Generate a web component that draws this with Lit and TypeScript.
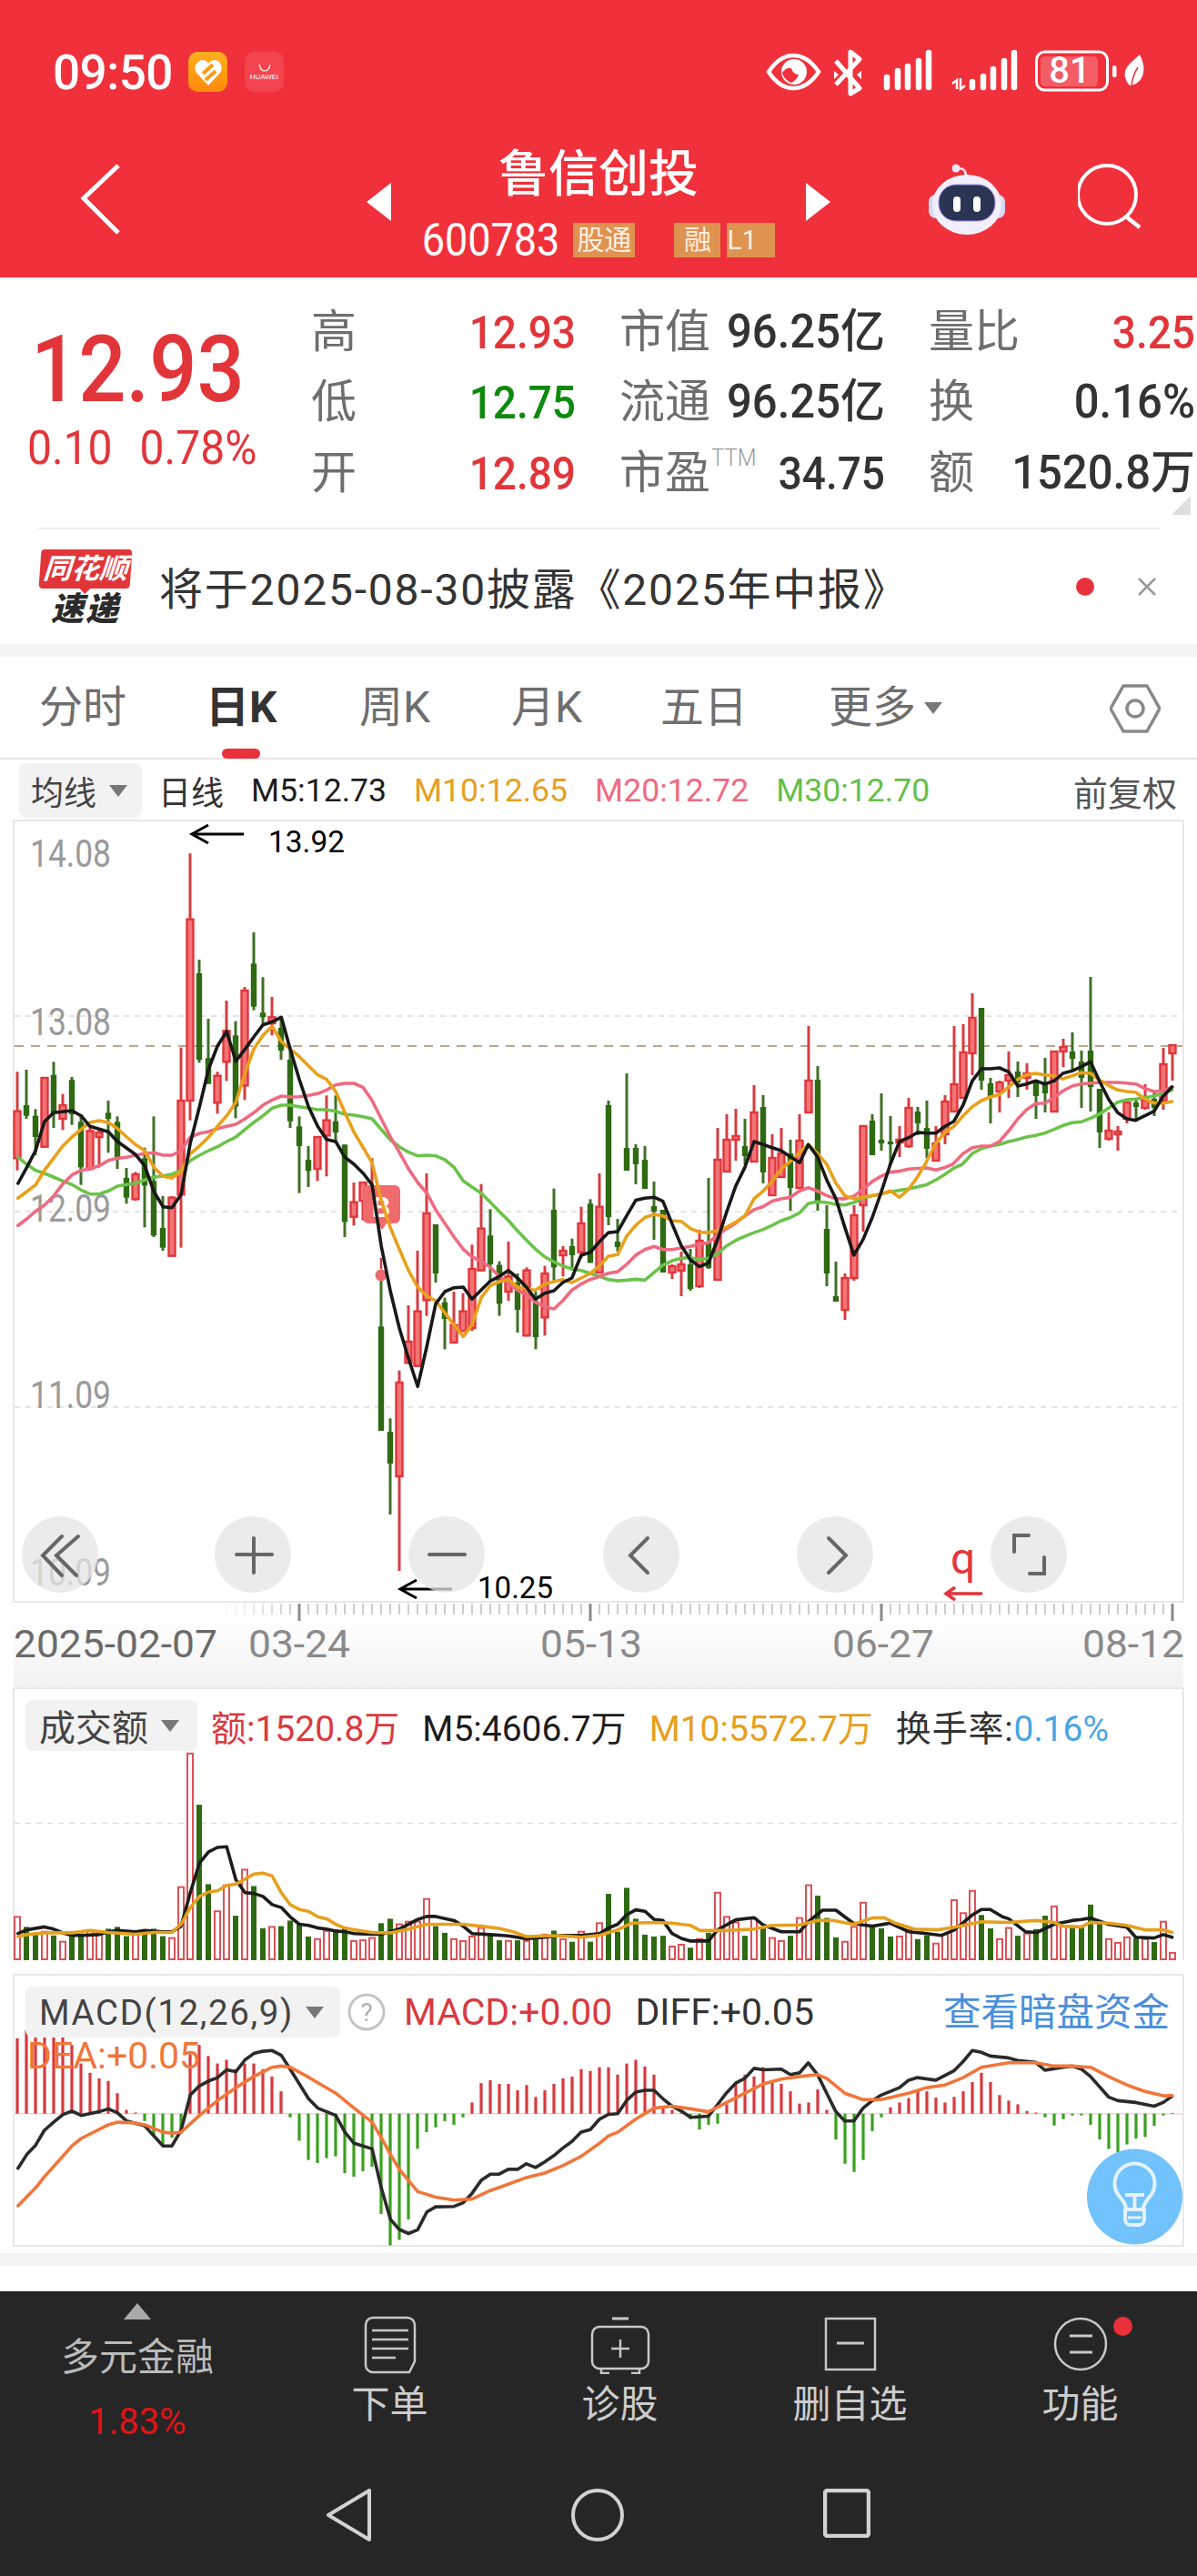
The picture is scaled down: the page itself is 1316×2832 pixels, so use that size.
import { LitElement, html, css, svg } from "lit";
import { customElement } from "lit/decorators.js";

type P = number[];
const ZX = 2.376;
const xL = (x: number) => x / ZX;
const xR = (x: number) => 656 + x / ZX;
const y5 = (y: number) => 1110 + y / 3; // left price crop
const y4 = (y: number) => 880 + y / 3; // upper right price crop
const y6 = (y: number) => 1280 + y / 2.904; // lower right price crop
const y7 = (y: number) => 1840 + y / 2.45; // lower panels
const cx = (i: number) => 19 + 10 * i;

function seg(a: P, fx: (n: number) => number, fy: (n: number) => number) {
  const o: string[] = [];
  for (let i = 0; i < a.length; i += 2) o.push(`${fx(a[i]).toFixed(1)},${fy(a[i + 1]).toFixed(1)}`);
  return o.join(" ");
}

const M5 = [
  seg([47,573,70,520,93,465,116,370,140,340,188,333,212,350,235,385,283,403,307,435,354,478,378,515,402,600,426,650,449,653,473,610,497,440,521,320,545,195,568,120,592,72,616,170,640,130,663,90,687,50,711,40,735,25,758,130,782,230,806,320,830,385,853,428,877,435,901,487,925,510,949,540,972,578,996,780,1020,930,1043,1050,1067,1150,1091,1243,1115,1110,1138,970,1162,930,1186,917,1210,915,1233,955,1257,925,1281,895,1304,880,1328,860,1352,885,1375,915,1399,955,1423,935,1447,927,1470,900,1494,885,1518,810,1542,800,1566,765], xL, y5),
  seg([31,218,55,215,78,165,102,115,126,108,150,105,173,118,197,190,221,260,245,305,268,327,292,315,316,240,340,150,363,70,387,10], xR, y6),
  seg([411,1125,435,1135,458,1145,482,1155,506,1175,530,1195,553,1135,577,1175], xR, y4),
  seg([601,50,625,110,648,200,672,290,696,240,720,170,743,90,767,0], xR, y6),
  seg([791,1125,815,1112,838,1095,862,1097,886,1097,910,1075,933,1058,957,1005,981,925,1005,885,1028,885,1052,882,1076,895,1100,942,1123,935,1147,925,1171,935,1195,925,1218,900,1242,892,1266,878,1290,862,1313,925,1337,985,1361,1030,1385,1050,1408,1055,1432,1040,1456,1025,1480,975,1503,945], xR, y4),
].join(" ");
const M10 = [
  seg([47,622,70,600,93,578,116,530,140,490,164,450,188,420,212,395,235,372,259,366,283,372,307,392,331,420,354,445,378,465,402,520,426,550,449,555,473,535,497,475,521,450,545,420,568,385,592,350,616,305,640,210,663,130,687,85,711,55,735,105,758,130,782,155,806,185,830,215,853,230,877,270,901,340,925,405,949,455,972,505,996,630,1020,720,1043,790,1067,860,1091,915,1115,945,1138,960,1162,1000,1186,1040,1210,1078,1233,1040,1257,950,1281,910,1304,897,1328,890,1352,915,1375,922,1399,925,1423,905,1447,897,1470,890,1494,900,1518,885,1542,870,1566,845], xL, y5),
  seg([31,293,55,288,78,230,102,195,126,170,150,160,173,165,197,180,221,182,245,205,268,217,292,218,316,212,340,200,363,185,387,165,411,110,435,85,458,55,482,15], xR, y6),
  seg([506,1190,530,1160,553,1135,577,1165,601,1200], xR, y4),
  seg([625,60,648,100,672,110,696,105,720,100,743,95,767,85,791,105,815,80,838,40,858,0], xR, y6),
  seg([886,1130,910,1095,933,1075,957,1040,981,1010,1005,990,1028,978,1052,970,1076,945,1100,920,1123,905,1147,900,1171,905,1195,908,1218,918,1242,908,1266,898,1290,900,1313,922,1337,940,1361,955,1385,960,1408,962,1432,985,1456,998,1480,998,1503,993], xR, y4),
].join(" ");
const M20 = [
  seg([47,712,70,690,93,665,116,645,140,615,164,575,188,545,212,530,235,525,259,515,283,497,307,490,331,487,354,480,378,475,402,472,426,480,449,480,473,465,497,420,521,408,545,402,568,392,592,385,616,378,640,360,663,340,687,315,711,298,735,285,758,288,782,287,806,283,830,277,853,265,877,248,901,243,925,243,949,257,972,300,996,360,1020,420,1043,470,1067,525,1091,570,1115,605,1138,660,1162,705,1186,750,1210,790,1233,815,1257,830,1281,850,1304,880,1328,900,1352,925,1375,940,1399,965,1423,980,1447,987,1470,960,1494,925,1518,905,1542,890,1566,880], xL, y5),
  seg([31,348,55,343,78,320,102,290,126,272,150,262,173,272,197,272,221,267,245,262,268,255,292,250,316,225,340,205,363,188,387,165,411,145,435,135,458,118,482,110,506,105,530,85,553,75,577,85,601,100,625,110,648,110,672,102,696,80,720,55,743,38,767,25,791,22,815,15,838,13,862,12,886,18,910,10,930,0], xR, y6),
  seg([957,1165,981,1145,1005,1140,1028,1140,1052,1125,1076,1090,1100,1050,1123,1020,1147,1000,1171,998,1195,980,1218,958,1242,942,1266,935,1290,932,1313,930,1337,930,1361,930,1385,932,1408,935,1432,950,1456,960,1480,958,1503,945], xR, y4),
].join(" ");
const M30 = [
  seg([47,487,70,510,93,530,116,540,140,552,164,565,188,577,212,595,235,608,259,608,283,598,307,582,331,577,354,572,378,562,402,553,426,548,449,543,473,530,497,498,521,480,545,465,568,452,592,435,616,420,640,395,663,372,687,350,711,325,735,315,758,315,782,320,806,325,830,330,853,330,877,335,901,345,925,348,949,353,972,360,996,395,1020,430,1043,452,1067,470,1091,482,1115,480,1138,482,1162,495,1186,520,1210,565,1233,585,1257,605,1281,635,1304,665,1328,695,1352,730,1375,760,1399,790,1423,815,1447,832,1470,845,1494,855,1518,860,1542,870,1566,880], xL, y5),
  seg([31,368,55,372,78,370,102,367,126,370,150,345,173,322,197,308,221,300,245,298,268,305,292,300,316,285,340,260,363,243,387,230,411,218,435,208,458,195,482,180,506,170,530,155,553,125,577,120,601,122,625,128,648,130,672,122,696,108,720,100,743,95,767,88,791,83,815,78,838,72,862,65,886,50,910,32,933,12,955,0], xR, y6),
  seg([981,1165,1005,1148,1028,1140,1052,1135,1076,1125,1100,1118,1123,1110,1147,1105,1171,1097,1195,1085,1218,1072,1242,1063,1266,1060,1290,1048,1313,1035,1337,1015,1361,995,1385,987,1408,985,1432,980,1456,975,1480,965,1503,955], xR, y4),
].join(" ");

// wick top, body top, body bottom, wick bottom, red=1 (left crop units)
const CL: P[] = [
  [205,335,490,530,1],[198,315,350,360,0],[328,350,420,480,0],[225,225,452,455,1],[172,215,345,390,0],[278,315,360,397,1],[222,232,345,380,0],[345,370,520,578,0],[390,400,525,530,1],[395,405,420,520,1],
  [300,340,360,472,0],[352,370,495,525,0],[522,555,620,640,0],[535,543,625,630,1],[455,490,580,718,0],[352,565,745,750,0],[615,720,785,795,0],[615,620,812,812,1],[125,300,610,785,1],[-515,-298,300,365,1],
  [-165,-120,165,175,0],[30,160,245,245,0],[205,218,307,343,1],[-30,70,172,235,1],[38,85,320,358,0],[-75,-63,250,298,1],[-255,-152,-10,2,0],[-107,10,25,45,0],[-42,25,45,85,1],[25,60,135,165,0],
  [120,165,368,390,0],[352,385,450,605,0],[450,495,532,585,0],[420,420,525,565,1],[283,365,415,550,1],[283,368,405,440,0],[445,445,700,750,0],[570,635,683,712,1],[570,570,630,695,1],[490,585,655,660,1],
  [870,1045,1389,1389,0],[1348,1392,1497,1665,0],[1190,1230,1539,1851,1],[975,1095,1165,1165,1],[795,995,1175,1178,1],[540,672,958,1010,1],[708,708,870,900,0],[950,965,1020,1120,0],[930,1040,1098,1098,1],[935,995,1060,1060,1],
  [775,855,1050,1060,1],[575,722,860,862,1],[658,745,840,895,0],[830,842,970,1010,0],[765,880,930,960,1],[870,900,990,1065,0],[850,860,1075,1075,1],[930,960,1080,1120,0],[845,870,1015,1075,1],[590,660,850,900,0],
  [780,795,810,880,1],[755,780,810,860,0],[650,705,800,820,1],[625,640,835,835,0],[540,650,867,867,1],
];
// same, already in page pixels
const CR: P[] = [
  [1210,1215,1338,1347,0],[1340,1365,1371,1376,0],[1180,1262,1287,1287,0],[1258,1262,1280,1302,0],[1260,1275,1307,1307,0],[1299,1326,1332,1363,0],[1330,1330,1399,1399,0],[1390,1392,1399,1406,1],[1376,1390,1397,1425,1],
  [1373,1390,1417,1419,0],[1352,1364,1414,1416,1],[1295,1366,1394,1395,0],[1240,1275,1407,1407,1],[1225,1253,1288,1288,1],[1219,1249,1253,1276,1],[1230,1260,1271,1280,0],[1193,1223,1277,1277,1],[1204,1217,1289,1301,0],[1247,1273,1314,1314,1],
  [1240,1268,1294,1294,1],[1253,1268,1306,1331,0],[1225,1254,1306,1306,1],[1128,1188,1223,1223,1],[1172,1187,1321,1331,0],[1325,1351,1400,1414,0],[1387,1425,1431,1431,0],[1400,1405,1440,1451,1],[1325,1336,1405,1408,1],[1238,1238,1325,1354,1],
  [1225,1232,1270,1270,0],[1202,1253,1257,1265,0],[1227,1255,1258,1280,0],[1238,1253,1256,1272,1],[1207,1218,1260,1262,1],[1217,1222,1235,1248,0],[1210,1240,1263,1273,0],[1238,1257,1276,1276,1],[1204,1211,1247,1258,1],[1128,1192,1222,1222,1],
  [1126,1157,1207,1208,1],[1092,1119,1158,1182,1],[1108,1108,1188,1198,0],[1185,1191,1205,1235,0],[1188,1190,1200,1223,1],[1156,1182,1188,1207,1],[1167,1178,1190,1206,0],[1169,1180,1185,1198,1],[1187,1188,1205,1230,0],[1163,1190,1202,1223,0],
  [1156,1156,1222,1222,1],[1142,1151,1156,1173,1],[1135,1156,1164,1177,0],[1155,1167,1185,1218,0],[1074,1155,1195,1222,0],[1197,1197,1245,1262,0],[1223,1243,1252,1254,1],[1238,1244,1247,1265,1],[1212,1212,1230,1235,1],[1207,1212,1217,1230,0],
  [1192,1210,1218,1220,1],[1200,1208,1218,1227,0],[1152,1170,1210,1220,1],[1149,1149,1158,1188,1],
];
const candles: P[] = [...CL.map((c) => [y5(c[0]), y5(c[1]), y5(c[2]), y5(c[3]), c[4]]), ...CR];

// r/g volume tops (crop units; bottom at 772)
const VOL: [number, number][] = ([
  [1,655],[0,682],[0,700],[1,695],[0,705],[1,722],[0,705],[0,700],[1,692],[1,700],[0,687],[0,682],[0,707],[1,700],[0,695],[0,687],[0,707],[1,712],[1,575],[1,215],[0,353],[0,567],[1,640],[1,570],[0,652],[1,528],[0,572],[0,686],[1,682],[0,680],[0,665],[0,672],[0,708],[1,715],[1,693],[0,695],[0,685],[1,720],[1,718],[1,712],[0,672],[0,660],[1,675],[1,668],[1,668],[1,607],[0,680],[0,698],[1,715],[1,720],[1,708],[1,685],[0,705],[0,718],[1,720],[0,718],[1,720],[0,715],[1,703],[0,692],[1,715],[0,722],[1,695],[0,722],
  [1,672],[0,593],[0,695],[0,577],[0,660],[0,703],[0,708],[0,706],[1,735],[1,730],[0,738],[1,715],[0,698],[1,590],[1,655],[1,670],[0,706],[1,660],[0,685],[1,712],[1,720],[0,706],[1,658],[1,570],[0,598],[0,658],[0,710],[1,722],[1,682],[1,617],[0,680],[0,686],[0,708],[1,708],[1,690],[0,715],[0,705],[1,727],[1,702],[1,610],[1,645],[1,585],[0,650],[0,686],[1,715],[1,685],[0,706],[1,700],[0,688],[0,652],[1,627],[1,680],[0,680],[0,680],[0,622],[0,672],[1,715],[1,725],[1,710],[0,713],[1,715],[0,723],[1,668],[1,752],
] as [number, number][]);
const VOLB = [
  seg([47,700,70,690,116,682,140,688,164,698,188,705,212,705,259,703,283,695,307,692,354,695,378,692,426,695,449,695,473,680,497,590,521,510,545,480,568,468,592,466,616,555,640,590,663,592,687,600,711,622,735,630,758,655,782,675,806,678,830,685,853,688,877,693,901,695,925,700,972,702,996,702,1043,688,1091,662,1115,654,1138,654,1186,665,1210,680,1233,700,1281,703,1328,706,1375,714,1423,710,1470,705,1518,705,1566,700], xL, y7),
  seg([31,685,55,675,78,650,102,636,126,640,150,662,173,665,197,700,221,713,245,720,292,720,316,690,363,663,411,657,435,677,482,695,530,695,553,668,590,637,625,637,670,672,696,677,720,680,767,672,815,695,862,700,900,705,935,690,981,650,1005,635,1028,635,1060,655,1076,660,1120,695,1150,697,1195,675,1242,665,1266,662,1290,658,1337,675,1385,683,1408,710,1456,712,1480,703,1503,710], xR, y7),
].join(" ");
const VOLO = [
  seg([47,708,70,703,116,698,188,698,235,692,283,697,354,702,402,697,449,697,473,675,497,630,521,600,545,588,568,585,592,570,616,567,640,553,663,540,687,537,711,545,735,590,758,622,782,635,806,640,830,655,853,660,877,675,901,685,925,690,972,697,1020,698,1067,688,1115,675,1162,675,1210,675,1257,680,1304,686,1340,695,1375,708,1423,706,1470,706,1518,710,1566,705], xL, y7),
  seg([55,690,90,672,150,670,197,672,245,678,270,692,340,692,411,688,458,678,530,677,577,665,620,665,670,675,720,658,750,657,780,672,830,688,890,690,935,683,1005,668,1076,670,1147,665,1195,670,1218,680,1266,682,1290,670,1337,672,1385,678,1432,690,1480,690,1503,697], xR, y7),
].join(" ");

const MACD = [982,960,968,950,963,975,1000,1050,1075,1090,1097,1130,1175,1182,1205,1245,1270,1250,1240,1025,1000,1030,1050,1040,1065,1050,1050,1065,1085,1125,1195,1258,1310,1318,1305,1300,1345,1355,1340,1328,1455,1540,1525,1470,1280,1235,1222,1205,1215,1195,1155,1103,1095,1105,1105,1122,1108,1140,1122,1105,1090,1085,1065,1070,
  1060,1060,1080,1050,1040,1058,1080,1165,1175,1182,1200,1228,1215,1212,1160,1105,1080,1085,1060,1095,1105,1125,1158,1155,1120,1175,1255,1320,1342,1310,1232,1195,1168,1155,1143,1120,1125,1142,1155,1140,1125,1100,1075,1100,1135,1150,1160,1178,1182,1195,1217,1200,1190,1190,1215,1255,1280,1290,1268,1252,1248,1218,1190,1183];
const DIFF = [
  seg([47,1332,70,1295,93,1270,116,1230,140,1208,164,1188,188,1178,212,1190,259,1180,283,1172,307,1183,331,1205,378,1218,402,1245,426,1272,449,1272,473,1230,497,1135,521,1110,545,1097,568,1088,592,1067,616,1072,640,1040,663,1023,687,1017,711,1015,735,1028,758,1065,782,1105,806,1145,830,1170,877,1190,901,1235,925,1265,972,1280,996,1385,1020,1470,1043,1497,1067,1508,1091,1498,1115,1450,1138,1436,1186,1435,1210,1425,1233,1400,1257,1365,1281,1348,1304,1348,1328,1335,1352,1335,1375,1320,1399,1330,1423,1315,1447,1298,1470,1278,1494,1260,1518,1235,1542,1228,1566,1200], xL, y7),
  seg([31,1187,55,1185,78,1150,102,1127,126,1122,150,1122,173,1145,197,1165,221,1178,245,1195,292,1192,316,1160,340,1128,363,1103,387,1090,411,1063,435,1067,482,1065,506,1080,530,1075,553,1048,577,1080,601,1130,625,1180,648,1205,672,1205,696,1170,720,1150,743,1135,791,1115,815,1095,838,1088,886,1095,933,1070,957,1045,981,1015,1005,1020,1028,1030,1076,1035,1100,1042,1147,1047,1171,1068,1218,1060,1242,1057,1266,1065,1290,1085,1337,1140,1361,1150,1408,1155,1456,1165,1480,1155,1503,1138], xR, y7),
].join(" ");
const DEA = [
  seg([47,1433,93,1385,116,1355,188,1272,212,1252,283,1215,307,1208,354,1210,378,1215,426,1235,449,1238,473,1235,521,1190,568,1150,616,1115,663,1085,711,1060,735,1057,758,1060,806,1087,877,1130,925,1170,972,1208,996,1250,1020,1295,1043,1335,1067,1365,1091,1395,1138,1410,1186,1418,1233,1415,1281,1392,1328,1375,1375,1357,1423,1345,1470,1325,1518,1300,1566,1265], xL, y7),
  seg([31,1245,55,1235,102,1200,150,1170,197,1165,245,1172,292,1180,340,1155,387,1130,435,1105,482,1092,530,1085,577,1080,601,1090,648,1130,696,1147,743,1147,815,1130,862,1115,910,1108,957,1088,1005,1060,1076,1048,1147,1048,1195,1057,1242,1057,1290,1060,1337,1085,1385,1108,1432,1125,1480,1137,1503,1136], xR, y7),
].join(" ");

const RED = "#e1363b";
const GRN = "#2f6a13";

const priceSvg = () => svg`
  <defs>
    <linearGradient id="shade" x1="0" y1="0" x2="0" y2="1"><stop offset="0" stop-color="#fff"/><stop offset="1" stop-color="#f2f2f2"/></linearGradient>
  </defs>
  <rect x="15" y="1776" width="1286" height="79" fill="url(#shade)"/>
  <rect x="15" y="902" width="1286" height="859" fill="none" stroke="#e8e8e8" stroke-width="2"/>
  ${[1117, 1332, 1547].map((y) => svg`<line x1="16" x2="1300" y1=${y} y2=${y} stroke="#dcdcdc" stroke-width="1.5" stroke-dasharray="6 6"/>`)}
  <line x1="16" x2="1300" y1="1150" y2="1150" stroke="#b7a98a" stroke-width="2" stroke-dasharray="10 8"/>
  ${[["14.08", 953], ["13.08", 1138], ["12.09", 1343], ["11.09", 1548], ["10.09", 1743]].map(
    ([t, y]) => svg`<text x="33" y=${y} class="ax" textLength="89" lengthAdjust="spacingAndGlyphs">${t}</text>`)}
  ${candles.map((c, i) => {
    const x = cx(i);
    const red = c[4] === 1;
    return svg`<line x1=${x} x2=${x} y1=${c[0]} y2=${c[3]} stroke=${red ? "#d63c40" : "#3f7027"} stroke-width="3"/>
    ${red
      ? svg`<rect x=${x - 3.5} y=${c[1]} width="7" height=${Math.max(c[2] - c[1], 2)} fill="#f27476" stroke=${RED} stroke-width="2.4"/>`
      : svg`<rect x=${x - 3.2} y=${c[1]} width="6.4" height=${Math.max(c[2] - c[1], 2)} fill=${GRN}/>`}`;
  })}
  <path d="M399 1309a6 6 0 0 1 6-6h29a6 6 0 0 1 6 6v30a6 6 0 0 1-6 6h-9l-5 7-5-7h-10a6 6 0 0 1-6-6z" fill="#ef6a6d"/>
  <text x="419" y="1338" class="bmark">B</text>
  <line x1="419" x2="419" y1="1383" y2="1395" stroke="#d63c40" stroke-width="2.5"/>
  <circle cx="419" cy="1402" r="6.5" fill="#ef6a6d"/>
  <polyline points=${M30} class="ln" stroke="#6cc24a"/>
  <polyline points=${M20} class="ln" stroke="#ef6a80"/>
  <polyline points=${M10} class="ln" stroke="#e9a01b"/>
  <polyline points=${M5} class="ln" stroke="#181818"/>
  <path d="M268 917H211M229 907l-18 10 18 10" class="arr" stroke="#000"/>
  <text x="295" y="937" class="note" textLength="84" lengthAdjust="spacingAndGlyphs">13.92</text>
  <path d="M497 1747H440M458 1737l-18 10 18 10" class="arr" stroke="#000"/>
  <text x="525" y="1757" class="note" textLength="83" lengthAdjust="spacingAndGlyphs">10.25</text>
  ${[66, 278, 491, 705, 918, 1131].map((x) => svg`<circle cx=${x} cy="1709" r="42" fill="#e4e4e4" fill-opacity=".75"/>`)}
  <path d="M84 1692l-24 21 22 22M66 1692l-21 21 21 22" class="ic" transform="translate(2 -3)"/>
  <path d="M279 1691v38M260 1709h39" class="ic"/>
  <path d="M472 1709h39" class="ic" stroke-width="5"/>
  <path d="M712 1691l-19 19 19 19" class="ic"/>
  <path d="M911 1691l19 19-19 19" class="ic"/>
  <path d="M1131 1688h-16v18M1132 1730h16v-18" class="ic" stroke-linecap="butt"/>
  <text x="1045" y="1730" class="q">q</text>
  <path d="M1080 1752h-40M1050 1745l-10 7 10 7" class="arr thin" stroke=${RED}/>
  ${Array.from({ length: 128 }, (_, i) => {
    const x = cx(i);
    const major = i % 32 === 31;
    const op = x < 240 ? 0 : x < 330 ? (x - 240) / 90 : 1;
    return svg`<line x1=${x} x2=${x} y1="1763" y2=${major ? 1782 : 1775} stroke=${major ? "#8a8a8a" : "#bdbdbd"} stroke-width=${major ? 3 : 1.5} opacity=${op}/>`;
  })}
  <text x="15" y="1822" class="dt dark" textLength="224" lengthAdjust="spacingAndGlyphs">2025-02-07</text>
  ${[["03-24", 273], ["05-13", 594], ["06-27", 915], ["08-12", 1190]].map(
    ([t, x]) => svg`<text x=${x} y="1822" class="dt" textLength="112" lengthAdjust="spacingAndGlyphs">${t}</text>`)}
`;

const volSvg = () => svg`
  <line x1="15" x2="1301" y1="1856" y2="1856" stroke="#e8e8e8" stroke-width="2"/>
  <line x1="15" x2="15" y1="1855" y2="2155" stroke="#e8e8e8" stroke-width="2"/>
  <line x1="1301" x2="1301" y1="1855" y2="2155" stroke="#e8e8e8" stroke-width="2"/>
  <line x1="16" x2="1300" y1="2004.5" y2="2004.5" stroke="#dedede" stroke-width="1.5" stroke-dasharray="6 6"/>
  ${VOL.map(([red, top], i) => {
    const x = cx(i);
    const y = y7(top);
    return red
      ? svg`<rect x=${x - 3} y=${y} width="6" height=${2154 - y} fill="#fff" stroke="#dc5257" stroke-width="2"/>`
      : svg`<rect x=${x - 3} y=${y} width="6" height=${2155 - y} fill=${GRN}/>`;
  })}
  <polyline points=${VOLB} class="ln" stroke="#1c1c1c"/>
  <polyline points=${VOLO} class="ln" stroke="#e5a01e"/>
`;

const macdSvg = () => svg`
  <rect x="15" y="2171" width="1286" height="298" fill="none" stroke="#e8e8e8" stroke-width="2"/>
  <line x1="16" x2="1300" y1="2323.7" y2="2323.7" stroke="#f2d5d5" stroke-width="1.5"/>
  ${MACD.map((z, i) => {
    const x = cx(i);
    const y = y7(z);
    const base = 2323.7;
    return svg`<line x1=${x} x2=${x} y1=${base} y2=${y} stroke=${y < base ? "#d6393e" : "#3aa01f"} stroke-width="3.2"/>`;
  })}
  <polyline points=${DIFF} class="ln" stroke="#2a2a2a"/>
  <polyline points=${DEA} class="ln" stroke="#f0763a"/>
  <circle cx="1247.5" cy="2415" r="52.5" fill="#72c2fb"/>
  <path d="M1238 2429c0-6-3-9-7-14a22 22 0 1 1 33 0c-4 5-7 8-7 14zM1237 2413h21M1247.5 2413v16M1237 2429h21v11a6 6 0 0 1-6 6h-9a6 6 0 0 1-6-6z" fill="none" stroke="#e2f2ff" stroke-width="4" stroke-linejoin="round"/>
  <line x1="1240" x2="1255" y1="2438" y2="2438" stroke="#e2f2ff" stroke-width="3"/>
`;

const statusRight = () => svg`
  <path d="M845 79c8-12 17-18 27-18s20 6 28 18c-8 12-18 18-28 18s-19-6-27-18z" fill="none" stroke="#fff" stroke-width="4.5"/>
  <circle cx="873" cy="79" r="14" fill="#fff"/>
  <path d="M860 80c3-5 7-6 10-5 1 4 4 7 8 7-1 3-4 8-9 9-4-3-8-6-9-11z" fill="#f0303a"/>
  <path d="M919 67l26 30-10 6V57l10 8-26 28" fill="none" stroke="#fff" stroke-width="5" stroke-linejoin="round"/>
  <path d="M917 78l5 4-5 5zM947 78l-5 4 5 5z" fill="#fff"/>
  ${[[975, 85], [987, 78], [998, 73], [1010, 67], [1021, 58]].map(([x, t]) => svg`<line x1=${x} x2=${x} y1=${t} y2="96" stroke="#fff" stroke-width="6.5" stroke-linecap="round"/>`)}
  <path d="M1047 92l5-4v10M1056 86v12l5-4" fill="none" stroke="#fff" stroke-width="2.5"/>
  ${[[1069, 90], [1081, 84], [1092, 76], [1104, 67], [1115, 58]].map(([x, t]) => svg`<line x1=${x} x2=${x} y1=${t} y2="96" stroke="#fff" stroke-width="6.5" stroke-linecap="round"/>`)}
  <rect x="1144" y="62" width="63" height="33" rx="5" fill="#fff" fill-opacity=".22"/>
  <rect x="1139.5" y="57" width="78" height="42" rx="9" fill="none" stroke="#fff" stroke-width="3"/>
  <text x="1176" y="91" class="batt">81</text>
  <rect x="1223" y="72" width="4.5" height="13" rx="2" fill="#fff"/>
  <path d="M1253 60c5 10 6 18 2 26-3 5-9 8-13 8-6-7-7-14-3-20 3-5 9-9 14-14z" fill="#fff"/>
  <path d="M1244 94c1-8 3-14 7-20" fill="none" stroke="#f0303a" stroke-width="1.5"/>
`;

@customElement("app-root")
export class AppRoot extends LitElement {
  static styles = css`
    :host { display: block; width: 1316px; height: 2832px; overflow: hidden; background: #fff; font-family: Roboto, "Noto Sans CJK SC", sans-serif; color: #333; }
    svg { display: block; }
    .top { background: #f0303a; height: 305px; color: #fff; }
    .status { display: flex; align-items: flex-start; height: 105px; padding: 45px 57px 0 58px; box-sizing: border-box; }
    .clock { font-size: 53px; line-height: 50px; font-weight: 500; width: 131px; letter-spacing: -.5px; margin-top: 10px; }
    .app { width: 43px; height: 44px; border-radius: 10px; margin-left: 18px; margin-top: 12px; display: flex; align-items: center; justify-content: center; flex-direction: column; }
    .app.orange { background: linear-gradient(#ffb01e, #ff8a0a); }
    .app.hw { background: #f4444d; margin-left: 19px; font-size: 8px; line-height: 9px; font-family: "Liberation Sans", sans-serif; }
    .status-r { margin-left: auto; overflow: visible; }
    .nav { display: grid; grid-template-columns: 403px 510px 1fr; height: 200px; }
    .back { padding: 74px 0 0 86px; }
    .center { display: flex; justify-content: space-between; }
    .tri { margin-top: 96px; }
    .mid { display: flex; flex-direction: column; align-items: center; padding-top: 58px; }
    .name { font-size: 55px; line-height: 56px; font-weight: 500; letter-spacing: 0; }
    .sub { display: flex; align-items: center; margin-top: 26px; height: 38px; }
    .code { font-size: 45px; line-height: 38px; display: inline-block; transform: scaleY(1.12); margin-right: 15px; }
    .bdg { background: #df9350; color: #fdeee0; font-size: 30px; line-height: 38px; height: 38px; text-align: center; }
    .bdg.a { margin-right: 43px; width: 68px; }
    .bdg.b { margin-right: 7px; width: 51px; }
    .bdg.c { width: 53px; }
    .acts { display: flex; padding: 75px 0 0 108px; gap: 80px; align-items: flex-start; }

    .quote { height: 277px; position: relative; display: flex; box-sizing: border-box; padding-top: 21px; }
    .left { width: 342px; padding-left: 30px; box-sizing: border-box; }
    .big { font-size: 92px; line-height: 90px; font-weight: 500; color: #e2353a; margin: 36px 0 0 4px; transform: scaleY(1.11); transform-origin: center; }
    .chg { display: flex; gap: 30px; font-size: 48px; line-height: 50px; color: #e2353a; margin-top: 16px; }
    .chg span { display: inline-block; transform: scaleY(1.08); }
    .grid { display: grid; grid-template-columns: 291px 292px 293px; column-gap: 48px; grid-auto-rows: 77.5px; }
    .c { display: flex; justify-content: space-between; align-items: center; }
    .lab { font-size: 50px; line-height: 60px; color: #6e6e6e; display: flex; }
    .ttm { font-size: 24px; line-height: 30px; color: #999; margin-left: 1px; display: inline-block; transform: scaleY(1.1); font-weight: 300; }
    .val { font-size: 46px; line-height: 50px; display: inline-block; transform: scaleY(1.1); color: #333; font-weight: 500; white-space: nowrap; }
    .val.unit { font-size: 49px; transform: scaleY(1.05); }
    .val.r { color: #e2353a; }
    .val.g { color: #0d8a0d; }
    .corner { position: absolute; right: 7px; top: 240px; }
    .rule { position: absolute; left: 42px; right: 40px; bottom: 0; height: 2px; background: #eee; }

    .notice { height: 126px; display: flex; align-items: center; padding: 0 44px 0 43px; box-sizing: border-box; }
    .logo { width: 102px; display: flex; flex-direction: column; align-items: center; margin-top: 2px; }
    .banner { position: relative; width: 100px; height: 43px; background: #e2353a; border-radius: 4px; transform: skewX(-4deg); color: #fff; font-size: 31px; line-height: 43px; font-style: italic; font-weight: 700; text-align: center; white-space: nowrap; }
    .banner::after { content: ""; position: absolute; left: 44px; bottom: -6px; border: 7px solid transparent; border-top-color: #e2353a; border-bottom: 0; }
    .sd { font-size: 36px; line-height: 38px; font-weight: 900; font-style: italic; color: #2b2b2b; margin-top: 4px; letter-spacing: 2px; }
    .ntext { font-size: 48px; color: #333; margin-left: 30px; white-space: nowrap; letter-spacing: 1.8px; margin-top: -2px; }
    .dot { width: 20px; height: 20px; border-radius: 50%; background: #e8313a; margin-left: auto; }
    .close { margin-left: 47px; }
    .band { height: 14px; background: #f4f4f4; }

    .tabs { height: 113px; box-sizing: border-box; border-bottom: 2px solid #e6e6e6; display: grid; grid-template-columns: 186px 166px 167px 164px 185px 1fr 96px; align-items: start; padding-left: 43px; padding-top: 26px; font-size: 48px; line-height: 60px; color: #6e6e6e; position: relative; }
    .tab { position: relative; white-space: nowrap; }
    .tab.on { color: #333; font-weight: 700; margin-left: -3px; }
    .tab.on::after { content: ""; position: absolute; left: 18px; top: 75px; width: 42px; height: 11px; border-radius: 6px; background: #e8313a; }
    .more { display: flex; align-items: center; gap: 9px; height: 60px; }
    .hex { margin-top: 1px; }

    .ma { height: 65px; display: flex; gap: 30px; align-items: center; padding: 3px 22px 0 21px; box-sizing: border-box; font-size: 35.6px; white-space: nowrap; }
    .chip { display: flex; align-items: center; background: #f2f2f2; border-radius: 8px; color: #444; box-sizing: border-box; }
    .ma .chip { width: 135px; height: 60px; padding-left: 13px; gap: 14px; margin-right: -12px; font-size: 36px; }
    .t { width: 0; height: 0; border: 10px solid transparent; border-top: 13px solid #777; border-bottom: 0; flex: none; }
    .ma .day { font-size: 36px; color: #333; }
    .ma .end { margin-left: auto; font-size: 38px; color: #555; }
    .k { color: #1d1d1d; } .o { color: #e6a01e; } .p { color: #ef6a80; } .gr { color: #64bf4a; } .rd { color: #d93a3f; } .bl { color: #48a6e2; } .dk { color: #333; }
    .rate { letter-spacing: .8px; }
    .rate .bl { letter-spacing: 0; }

    .panel { position: relative; }
    .p-price { height: 955px; }
    .p-vol { height: 315px; }
    .p-macd { height: 307px; }
    .legend { position: absolute; left: 28px; top: 14px; display: flex; gap: 25px; align-items: center; font-size: 39px; white-space: nowrap; }
    .legend .chip { height: 56px; font-size: 40px; padding-left: 15px; gap: 14px; }
    .legend .vchip { width: 189px; margin-right: -10px; }
    .legend .mchip { width: 346px; margin-right: -17px; font-size: 38.5px; letter-spacing: 1.6px; }
    .legend .mchip .t { margin-left: -1px; }
    .mv { font-size: 41px; }
    .q-ic { margin-right: -5px; }
    .link { position: absolute; right: 30px; top: 9px; font-size: 41.5px; color: #4a8fdc; white-space: nowrap; }
    .dea { position: absolute; left: 30px; top: 68px; font-size: 41px; line-height: 44px; color: #f0763a; white-space: nowrap; }
    svg text { font-family: Roboto, "Noto Sans CJK SC", sans-serif; }
    .ax { font-size: 42px; fill: #9a9a9a; }
    .bmark { font-size: 32px; fill: #fff; text-anchor: middle; font-weight: 700; }
    .note { font-size: 34px; fill: #000; }
    .q { font-size: 48px; fill: #e1363b; }
    .dt { font-size: 42px; fill: #8a8a8a; }
    .dt.dark { fill: #6a6a6a; }
    .ln { fill: none; stroke-width: 3.6; stroke-linejoin: round; stroke-linecap: round; }
    .arr { fill: none; stroke-width: 3; }
    .arr.thin { stroke-width: 3.5; }
    .ic { fill: none; stroke: #666; stroke-width: 4; stroke-linecap: round; }
    .batt { font-size: 40px; fill: #fff; text-anchor: middle; font-weight: 500; }

    .spacer { height: 28px; }
    .foot { height: 313px; background: #262626; color: #ccc; }
    .tools { display: grid; grid-template-columns: 302px repeat(4, 253px); height: 190px; }
    .tool { display: flex; flex-direction: column; align-items: center; padding-top: 27px; position: relative; font-size: 42px; line-height: 44px; }
    .tool svg { margin-bottom: 12px; }
    .first { padding-top: 13px; color: #bbb; }
    .first .name2 { margin-top: 20px; }
    .pct { color: #e01414; margin-top: 27px; font-size: 40px; }
    .up { width: 0; height: 0; border: 15px solid transparent; border-bottom: 18px solid #aaa; border-top: 0; }
    .badge { position: absolute; left: 163px; top: 28px; width: 21px; height: 21px; border-radius: 50%; background: #e8313a; }
    .sys { display: flex; gap: 219px; padding: 27px 0 0 359px; align-items: flex-start; }
  `;

  cell(label: unknown, val: string, cls: string) {
    return html`<div class="c"><span class="lab">${label}</span><span class="val ${cls}">${val}</span></div>`;
  }

  render() {
    return html`
      <div class="top">
        <div class="status">
          <span class="clock">09:50</span>
          <span class="app orange">
            <svg width="30" height="32" viewBox="0 0 30 32"><path d="M15 31L2 17C-2 11 3 3 9 3c3 0 5 2 6 4 2-3 4-4 7-4 6 0 10 8 6 14z" fill="#fff"/><path d="M9 18l11-10M12 25l11-10" stroke="#ff9a12" stroke-width="4"/></svg>
          </span>
          <span class="app hw">
            <svg width="18" height="10" viewBox="0 0 18 10"><path d="M3 1c1 4 3 7 6 7s5-3 6-7" fill="none" stroke="#fff" stroke-width="1.2"/></svg>
            HUAWEI
          </span>
          <svg class="status-r" width="414" height="60" viewBox="845 45 414 60">${statusRight()}</svg>
        </div>
        <div class="nav">
          <div class="back"><svg width="46" height="80" viewBox="0 0 46 80"><path d="M44 3L6 39l38 38" fill="none" stroke="#fff" stroke-width="5"/></svg></div>
          <div class="center">
            <svg class="tri" width="27" height="42" viewBox="0 0 27 42"><path d="M27 0v42L0 21z" fill="#fff"/></svg>
            <div class="mid">
              <div class="name">鲁信创投</div>
              <div class="sub"><span class="code">600783</span><span class="bdg a">股通</span><span class="bdg b">融</span><span class="bdg c">L1</span></div>
            </div>
            <svg class="tri" width="27" height="42" viewBox="0 0 27 42"><path d="M0 0v42l27-21z" fill="#fff"/></svg>
          </div>
          <div class="acts">
            <svg width="84" height="78" viewBox="1019 180 84 78">
              <circle cx="1049" cy="185" r="4.5" fill="#e9e7f8"/><path d="M1052 185c6 0 8 3 8 9" fill="none" stroke="#e9e7f8" stroke-width="2.5"/>
              <rect x="1019" y="214" width="84" height="26" rx="8" fill="#d9d8f0"/>
              <ellipse cx="1061" cy="225" rx="38" ry="33" fill="#f0effb"/>
              <rect x="1030" y="203" width="62" height="40" rx="19" fill="#2a3553" stroke="#a58be8" stroke-width="1"/>
              <rect x="1046" y="216" width="8" height="17" rx="4" fill="#fff"/><rect x="1068" y="216" width="8" height="17" rx="4" fill="#fff"/>
            </svg>
            <svg width="72" height="72" viewBox="1184 186 72 72"><circle cx="1216" cy="220" r="32" fill="none" stroke="#fff" stroke-width="4"/><path d="M1237 244l15 12" stroke="#fff" stroke-width="4.5"/></svg>
          </div>
        </div>
      </div>

      <div class="quote">
        <div class="left">
          <div class="big">12.93</div>
          <div class="chg"><span>0.10</span><span>0.78%</span></div>
        </div>
        <div class="grid">
          ${this.cell("高", "12.93", "r")}
          ${this.cell("市值", "96.25亿", "unit")}
          ${this.cell("量比", "3.25", "r")}
          ${this.cell("低", "12.75", "g")}
          ${this.cell("流通", "96.25亿", "unit")}
          ${this.cell("换", "0.16%", "unit")}
          ${this.cell("开", "12.89", "r")}
          ${this.cell(html`市盈<span class="ttm">TTM</span>`, "34.75", "")}
          ${this.cell("额", "1520.8万", "unit")}
        </div>
        <svg class="corner" width="21" height="21" viewBox="0 0 21 21"><path d="M21 0v21H0z" fill="#dedede"/></svg>
        <div class="rule"></div>
      </div>

      <div class="notice">
        <div class="logo"><div class="banner">同花顺</div><div class="sd">速递</div></div>
        <span class="ntext">将于2025-08-30披露《2025年中报》</span>
        <span class="dot"></span>
        <svg class="close" width="22" height="22" viewBox="0 0 22 22"><path d="M2 2l18 18M20 2L2 20" stroke="#999" stroke-width="2.5"/></svg>
      </div>
      <div class="band"></div>

      <div class="tabs">
        <span class="tab">分时</span><span class="tab on">日K</span><span class="tab">周K</span><span class="tab">月K</span><span class="tab">五日</span>
        <span class="tab more">更多<i class="t"></i></span>
        <svg class="hex" width="56" height="60" viewBox="0 0 56 60"><path d="M15 5h26l14 25-14 25H15L1 30z" fill="none" stroke="#888" stroke-width="3.5" stroke-linejoin="round"/><circle cx="28" cy="30" r="9" fill="none" stroke="#888" stroke-width="3.5"/></svg>
      </div>
      <div class="ma">
        <span class="chip">均线<i class="t"></i></span>
        <span class="day">日线</span>
        <span class="k">M5:12.73</span><span class="o">M10:12.65</span><span class="p">M20:12.72</span><span class="gr">M30:12.70</span>
        <span class="end">前复权</span>
      </div>

      <div class="panel p-price"><svg width="1316" height="955" viewBox="0 900 1316 955">${priceSvg()}</svg></div>

      <div class="panel p-vol">
        <svg width="1316" height="315" viewBox="0 1855 1316 315">${volSvg()}</svg>
        <div class="legend">
          <span class="chip vchip">成交额<i class="t"></i></span>
          <span class="rd">额:1520.8万</span><span class="k">M5:4606.7万</span><span class="o">M10:5572.7万</span>
          <span class="dk rate">换手率:<span class="bl">0.16%</span></span>
        </div>
      </div>

      <div class="panel p-macd">
        <svg width="1316" height="307" viewBox="0 2170 1316 307">${macdSvg()}</svg>
        <div class="legend">
          <span class="chip mchip">MACD(12,26,9)<i class="t"></i></span>
          <svg class="q-ic" width="42" height="42" viewBox="0 0 42 42"><circle cx="21" cy="21" r="19" fill="none" stroke="#c4c4c4" stroke-width="3"/><text x="21" y="31" text-anchor="middle" font-size="28" fill="#b0b0b0">?</text></svg>
          <span class="rd mv">MACD:+0.00</span><span class="dk mv">DIFF:+0.05</span>
        </div>
        <span class="dea">DEA:+0.05</span>
        <span class="link">查看暗盘资金</span>
      </div>
      <div class="band"></div>
      <div class="spacer"></div>

      <div class="foot">
        <div class="tools">
          <div class="tool first"><i class="up"></i><span class="name2">多元金融</span><span class="pct">1.83%</span></div>
          <div class="tool">
            <svg width="58" height="64" viewBox="0 0 58 64" fill="none" stroke="#c8c8c8" stroke-width="2.5"><path d="M10 2h38a8 8 0 0 1 8 8v40l-6 12H10a8 8 0 0 1-8-8V10a8 8 0 0 1 8-8z"/><path d="M9 16h40M9 26h40M9 36h40M9 46h26"/></svg>
            下单
          </div>
          <div class="tool">
            <svg width="66" height="64" viewBox="0 0 66 64" fill="none" stroke="#c8c8c8" stroke-width="2.5"><path d="M24 3h18" stroke-width="3"/><rect x="2" y="12" width="62" height="46" rx="8"/><path d="M33 26v20M23 36h20M12 58v5h9M54 58v5h-9"/></svg>
            诊股
          </div>
          <div class="tool">
            <svg width="58" height="64" viewBox="0 0 58 64" fill="none" stroke="#c8c8c8" stroke-width="2.5"><rect x="2" y="3" width="54" height="56"/><path d="M14 30h30" stroke-width="3"/></svg>
            删自选
          </div>
          <div class="tool">
            <svg width="60" height="64" viewBox="0 0 60 64" fill="none" stroke="#c8c8c8" stroke-width="2.5"><circle cx="30" cy="31" r="28"/><path d="M18 22h25M18 40h25" stroke-width="3"/></svg>
            功能
            <i class="badge"></i>
          </div>
        </div>
        <div class="sys">
          <svg width="50" height="58" viewBox="0 0 50 58"><path d="M47 2v54L2 29z" fill="none" stroke="#d2d2d2" stroke-width="4" stroke-linejoin="round"/></svg>
          <svg width="58" height="58" viewBox="0 0 58 58"><circle cx="29" cy="29" r="27" fill="none" stroke="#d2d2d2" stroke-width="4"/></svg>
          <svg width="52" height="54" viewBox="0 0 52 54"><rect x="2" y="2" width="48" height="50" rx="3" fill="none" stroke="#d2d2d2" stroke-width="4.5"/></svg>
        </div>
      </div>
    `;
  }
}
